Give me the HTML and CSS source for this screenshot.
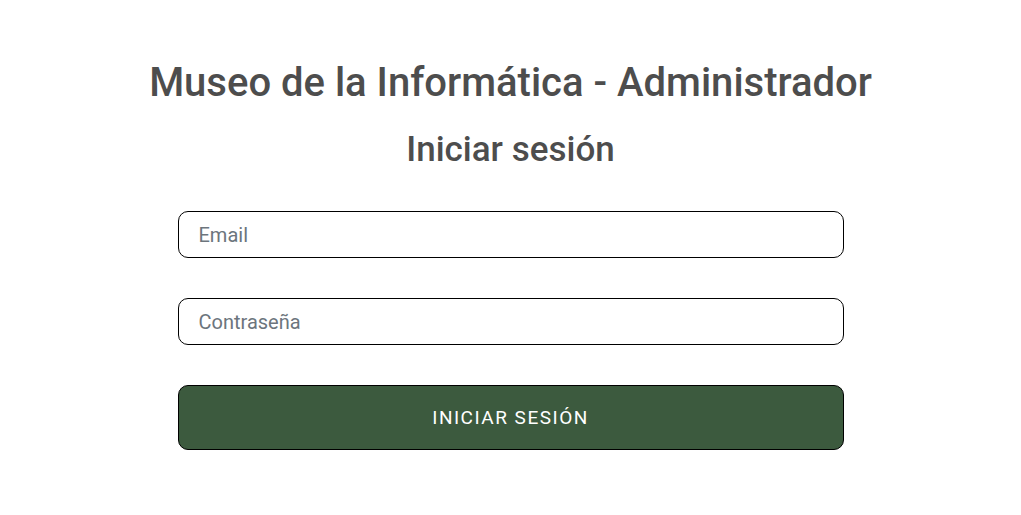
FILE: index.html
```html
<!DOCTYPE html>
<html lang="es">
<head>
<meta charset="utf-8">
<title>Museo de la Informática - Administrador</title>
<link rel="stylesheet" href="styles.css">
</head>
<body>
<main class="page">
  <h1 class="title">Museo de la Informática - Administrador</h1>
  <h2 class="subtitle">Iniciar sesión</h2>
  <form class="form">
    <input class="field" type="email" placeholder="Email">
    <input class="field" type="password" placeholder="Contraseña">
    <button class="submit" type="button">INICIAR SESIÓN</button>
  </form>
</main>
</body>
</html>
```
FILE: styles.css
```css
* { box-sizing: border-box; }
html, body { margin: 0; padding: 0; background: #fff; }
body { font-family: Roboto, "Noto Sans", sans-serif; }
.page {
  display: flex;
  flex-direction: column;
  align-items: center;
  padding-top: 57px;
}
.title {
  margin: 0;
  font-size: 40px;
  font-weight: 500;
  line-height: 52px;
  color: #4d4d4d;
}
.subtitle {
  margin: 19px 0 0;
  font-size: 35px;
  font-weight: 500;
  line-height: 44px;
  color: #4d4d4d;
}
.form {
  width: 666px;
  margin-top: 39px;
  display: flex;
  flex-direction: column;
  gap: 40px;
}
.field {
  height: 47px;
  border: 1px solid #000;
  border-radius: 10px;
  padding: 0 20px;
  font-family: inherit;
  font-size: 20px;
  color: #333;
  background: #fff;
  outline: none;
}
.field::placeholder { color: #6c757d; }
.submit {
  height: 65px;
  border: 1px solid #000;
  border-radius: 10px;
  background: #3c5a3e;
  color: #fff;
  font-family: inherit;
  font-size: 19px;
  font-weight: 400;
  letter-spacing: 1.5px;
}
```
